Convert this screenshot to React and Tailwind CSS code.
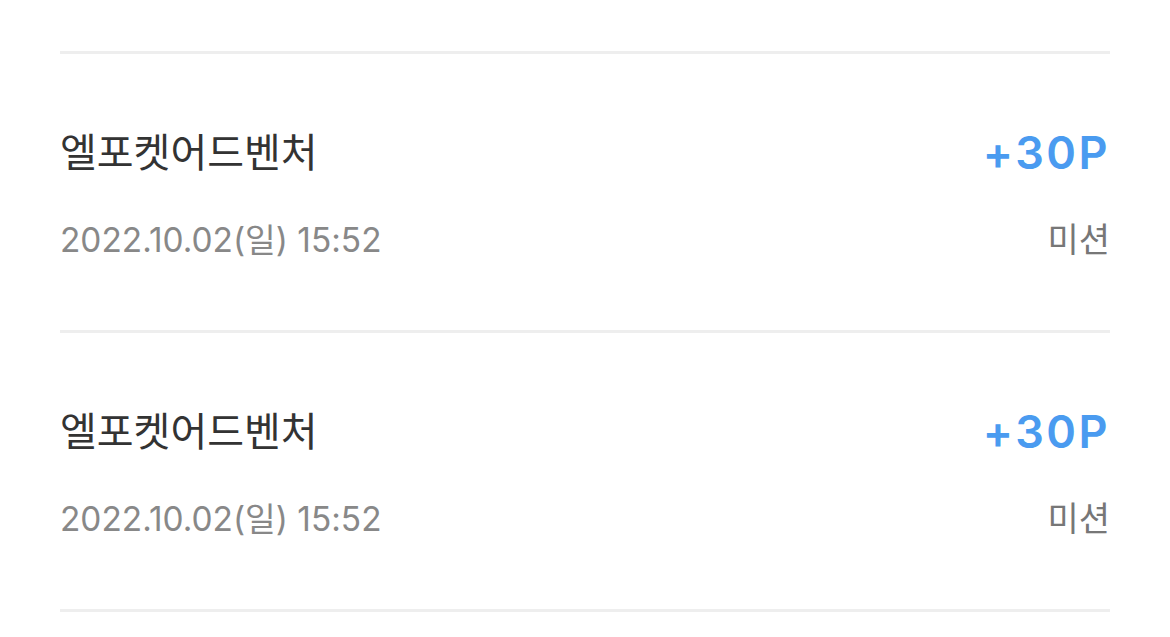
const items = [
  { title: "엘포켓어드벤처", point: "+30P", date: "2022.10.02(일) 15:52", type: "미션" },
  { title: "엘포켓어드벤처", point: "+30P", date: "2022.10.02(일) 15:52", type: "미션" },
];

export default function App() {
  return (
    <div
      className="min-h-screen bg-white px-[60px] pt-[51px]"
      style={{ fontFamily: 'Inter, "Noto Sans CJK KR", sans-serif' }}
    >
      {items.map((item, i) => (
        <div key={i} className="border-t-[3px] border-[#eeeeee] pt-[75px] pb-[70px]">
          <div className="flex items-center justify-between h-[48px]">
            <span className="text-[40px] leading-[48px] text-[#333333]">{item.title}</span>
            <span className="text-[45px] leading-[48px] font-semibold tracking-[2.5px] text-[#4a9bf0]">
              {item.point}
            </span>
          </div>
          <div className="flex items-center justify-between h-[40px] mt-[43px]">
            <span className="text-[33.4px] leading-[40px] text-[#888888]">{item.date}</span>
            <span className="text-[34px] leading-[40px] text-[#777777]">{item.type}</span>
          </div>
        </div>
      ))}
      <div className="border-t-[3px] border-[#eeeeee]" />
    </div>
  );
}
